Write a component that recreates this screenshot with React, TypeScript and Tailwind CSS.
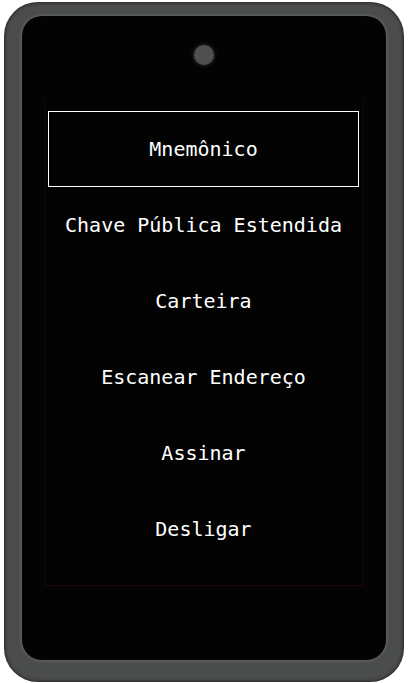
const items = [
  "Mnemônico",
  "Chave Pública Estendida",
  "Carteira",
  "Escanear Endereço",
  "Assinar",
  "Desligar",
];

export default function App() {
  return (
    <div className="w-[408px] h-[683px] bg-white pl-[4px] pt-[2px]">
      {/* device body */}
      <div className="w-[400px] h-[680px] rounded-[34px] bg-[#4b4d4c] pt-[14px] pl-[18px] pr-[18px] pb-[22px] shadow-[inset_0_0_4px_rgba(0,0,0,0.7)]">
        {/* screen */}
        <div className="h-full rounded-[20px] bg-[#030303] pt-[29px] shadow-[0_0_3px_1px_rgba(110,112,111,0.7)]">
          <div className="mx-auto w-[20px] h-[20px] rounded-full bg-[#4f4f4f] shadow-[0_0_5px_rgba(80,80,80,0.7)]" />
          <div className="mt-[35px] ml-[22px] w-[320px] border-r border-b border-l border-[#1e0606] pt-[11px] pb-[18px] pl-[3px]">
            {items.map((label, i) => (
              <div
                key={i}
                className={
                  "w-[311px] h-[76px] flex items-center justify-center text-white text-[20px] leading-none font-['DejaVu_Sans_Mono',monospace] " +
                  (i === 0 ? "border border-white" : "")
                }
              >
                {label}
              </div>
            ))}
          </div>
        </div>
      </div>
    </div>
  );
}
